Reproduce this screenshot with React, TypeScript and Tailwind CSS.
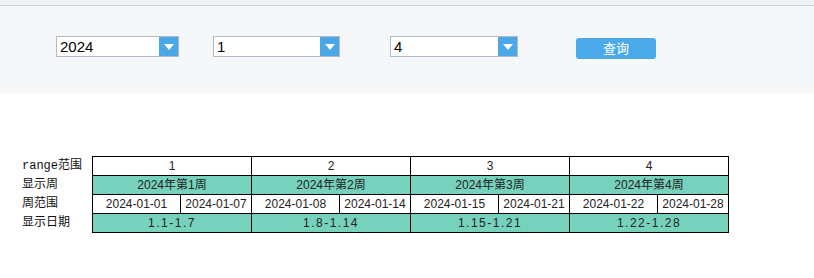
import { FC } from "react";

const weeks = [
  { no: 1, title: "2024年第1周", from: "2024-01-01", to: "2024-01-07", show: "1.1-1.7" },
  { no: 2, title: "2024年第2周", from: "2024-01-08", to: "2024-01-14", show: "1.8-1.14" },
  { no: 3, title: "2024年第3周", from: "2024-01-15", to: "2024-01-21", show: "1.15-1.21" },
  { no: 4, title: "2024年第4周", from: "2024-01-22", to: "2024-01-28", show: "1.22-1.28" },
];

const labels = ["range范围", "显示周", "周范围", "显示日期"];

const ComboBox: FC<{ value: string; className: string }> = ({ value, className }) => (
  <div className={`flex h-[21px] border border-[#b5bac8] bg-white ${className}`}>
    <div className="flex-1 pl-[3px] text-[15px] leading-[19px] text-black font-['Liberation_Sans_Narrow','Liberation_Sans',sans-serif]">
      {value}
    </div>
    <div className="flex w-[19px] items-center justify-center bg-[#4aa8e8]">
      <svg width="10" height="6" viewBox="0 0 10 6">
        <path d="M0 0H10L5 6Z" fill="#fff" />
      </svg>
    </div>
  </div>
);

export default function App() {
  return (
    <div className="min-h-[278px] w-[814px] bg-white font-['Liberation_Sans','Noto_Sans_CJK_SC',sans-serif]">
      {/* toolbar */}
      <div className="h-[6px] bg-[#f0f1f5] border-b border-[#d0d2d7]" />
      <div className="flex h-[87px] items-start bg-[#f6f7f9] pt-[30px]">
        <ComboBox value="2024" className="ml-[56px] w-[123px]" />
        <ComboBox value="1" className="ml-[34px] w-[127px]" />
        <ComboBox value="4" className="ml-[50px] w-[128px]" />
        <button className="ml-[58px] mt-[2px] h-[21px] w-[80px] rounded-[3px] bg-[#4aa9e9] text-[13px] leading-[21px] text-white">
          查询
        </button>
      </div>

      {/* week table */}
      <div className="mt-[63px] flex">
        <div className="ml-[22px] flex w-[70px] flex-col gap-px pt-px text-[12px] text-[#111] font-['Liberation_Mono','Noto_Sans_CJK_SC',monospace]">
          {labels.map((l) => (
            <div key={l} className="h-[18px] leading-[18px]">
              {l}
            </div>
          ))}
        </div>
        <div className="grid grid-cols-[87px_70px_87px_70px_87px_70px_87px_70px] grid-rows-[18px_18px_18px_18px] gap-px bg-black p-px text-[12px] leading-[18px] text-[#222]">
          {weeks.map((w) => (
            <div key={`n${w.no}`} className="col-span-2 bg-white text-center">
              {w.no}
            </div>
          ))}
          {weeks.map((w) => (
            <div key={`t${w.no}`} className="col-span-2 bg-[#76d2bc] text-center">
              {w.title}
            </div>
          ))}
          {weeks.map((w) => [
            <div key={`f${w.no}`} className="bg-white text-center">
              {w.from}
            </div>,
            <div key={`e${w.no}`} className="bg-white text-center">
              {w.to}
            </div>,
          ])}
          {weeks.map((w) => (
            <div key={`s${w.no}`} className="col-span-2 bg-[#76d2bc] text-center tracking-[1.5px]">
              {w.show}
            </div>
          ))}
        </div>
      </div>
    </div>
  );
}
